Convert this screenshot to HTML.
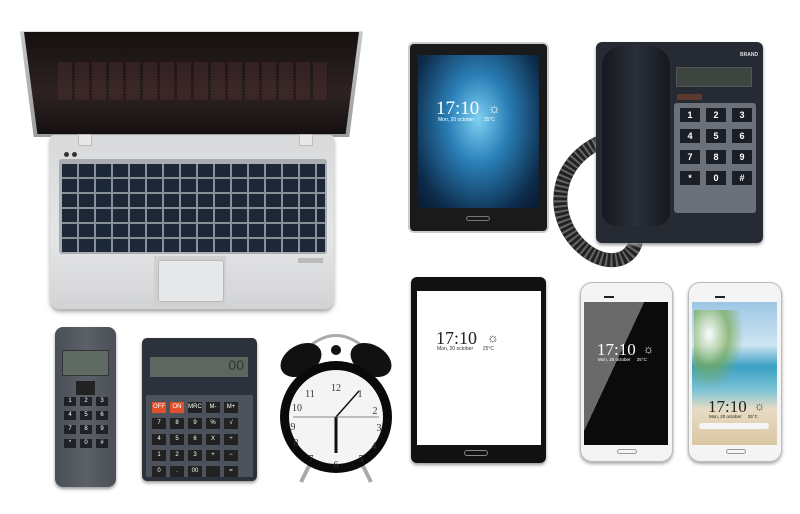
<!DOCTYPE html>
<html><head><meta charset="utf-8"><style>
*{margin:0;padding:0;box-sizing:border-box}
body{width:800px;height:514px;background:#fff;position:relative;overflow:hidden;font-family:"Liberation Sans",sans-serif}
.a{position:absolute}
.kb{background-color:#1c2738;background-image:repeating-linear-gradient(90deg,transparent 0 15px,#8a9098 15px 17px),repeating-linear-gradient(0deg,transparent 0 13px,#8a9098 13px 15px)}
.time{font-family:"Liberation Serif",serif}
</style></head><body>

<!-- laptop lid -->
<div class="a" style="left:20px;top:27px;width:343px;height:110px;background:linear-gradient(#c9cbcd,#9a9ca0);clip-path:polygon(0 4%,100% 4%,96% 100%,4% 100%);border-radius:6px"></div>
<div class="a" style="left:24px;top:32px;width:335px;height:102px;background:linear-gradient(180deg,#151010,#2e2222 60%,#151010);clip-path:polygon(0 0,100% 0,96% 100%,4% 100%)"></div>
<div class="a" style="left:58px;top:62px;width:270px;height:38px;opacity:.25;background-image:repeating-linear-gradient(90deg,#6a3a3a 0 14px,transparent 14px 17px),repeating-linear-gradient(0deg,transparent 0 2px,#000 2px 3px)"></div>
<!-- laptop base -->
<div class="a" style="left:50px;top:135px;width:284px;height:174px;background:linear-gradient(180deg,#d8d9db,#e4e5e7 60%,#d2d3d5);border-radius:4px 4px 10px 10px;box-shadow:0 3px 4px #aaa"></div>
<div class="a" style="left:78px;top:134px;width:14px;height:12px;background:#e8e8e8;border:1px solid #bbb"></div>
<div class="a" style="left:299px;top:134px;width:14px;height:12px;background:#e8e8e8;border:1px solid #bbb"></div>
<div class="a" style="left:64px;top:152px;width:5px;height:5px;border-radius:50%;background:#333"></div>
<div class="a" style="left:72px;top:152px;width:5px;height:5px;border-radius:50%;background:#333"></div>
<div class="a" style="left:59px;top:159px;width:268px;height:95px;background:#a9acb1;border-radius:3px"></div>
<div class="a kb" style="left:62px;top:164px;width:263px;height:88px"></div>
<div class="a" style="left:154px;top:256px;width:72px;height:50px;background:#cfd0d2"></div>
<div class="a" style="left:158px;top:260px;width:66px;height:42px;background:#e7e8ea;border:1px solid #bbb;border-radius:3px"></div>
<div class="a" style="left:298px;top:258px;width:25px;height:5px;background:#bbb"></div>

<!-- tablet 1 -->
<div class="a" style="left:408px;top:42px;width:141px;height:191px;background:#1a1a1a;border-radius:6px;border:2px solid #ccc"></div>
<div class="a" style="left:418px;top:55px;width:121px;height:153px;background:radial-gradient(ellipse at 50% 42%,#7fd0f2,#2a80b8 35%,#0d2b4a 80%,#081a30 100%)"></div>
<div class="a time" style="left:436px;top:98px;color:#fff;font-size:19px">17:10</div>
<div class="a" style="left:488px;top:100px;color:#fff;font-size:14px">☼</div>
<div class="a" style="left:438px;top:117px;color:#fff;font-size:5px">Mon, 20 october &nbsp; &nbsp; &nbsp; 25°C</div>
<div class="a" style="left:466px;top:216px;width:24px;height:5px;border:1px solid #777;border-radius:3px"></div>

<!-- desk phone cord -->
<svg class="a" style="left:545px;top:130px" width="110" height="140"><path d="M60 10 C10 30,5 80,30 110 S90 135,92 105" fill="none" stroke="#222" stroke-width="14"/><path d="M60 10 C10 30,5 80,30 110 S90 135,92 105" fill="none" stroke="#666" stroke-width="14" stroke-dasharray="2 3"/></svg>
<!-- desk phone -->
<div class="a" style="left:596px;top:42px;width:167px;height:201px;background:#252a33;border-radius:6px;box-shadow:0 2px 3px #999"></div>
<div class="a" style="left:602px;top:46px;width:68px;height:180px;background:linear-gradient(90deg,#15181e,#2a2f39,#15181e);border-radius:20px 20px 14px 14px"></div>
<div class="a" style="left:740px;top:52px;color:#ddd;font-size:5px;font-weight:bold">BRAND</div>
<div class="a" style="left:676px;top:67px;width:76px;height:20px;background:#3d4540;border:1px solid #555"></div>
<div class="a" style="left:677px;top:94px;width:25px;height:6px;background:#5a3a2a"></div>
<div class="a" style="left:674px;top:103px;width:82px;height:110px;background:#6b7079;border-radius:3px"></div>
<div class="a" style="left:680px;top:108px;width:72px;display:grid;grid-template-columns:repeat(3,20px);gap:7px 6px;color:#fff;font-size:9px;font-weight:bold;text-align:center;line-height:14px">
<span style="background:#1a1e26">1</span><span style="background:#1a1e26">2</span><span style="background:#1a1e26">3</span><span style="background:#1a1e26">4</span><span style="background:#1a1e26">5</span><span style="background:#1a1e26">6</span><span style="background:#1a1e26">7</span><span style="background:#1a1e26">8</span><span style="background:#1a1e26">9</span><span style="background:#1a1e26">*</span><span style="background:#1a1e26">0</span><span style="background:#1a1e26">#</span></div>

<!-- remote -->
<div class="a" style="left:55px;top:327px;width:61px;height:160px;background:linear-gradient(90deg,#4a4f56,#5c6169,#4a4f56);border-radius:8px;box-shadow:0 2px 3px #999"></div>
<div class="a" style="left:62px;top:350px;width:47px;height:26px;background:#5f6a62;border:1px solid #333"></div>
<div class="a" style="left:76px;top:381px;width:19px;height:14px;background:#222"></div>
<div class="a" style="left:64px;top:397px;width:45px;display:grid;grid-template-columns:repeat(3,12px);gap:5px 4px;color:#fff;font-size:6px;text-align:center;line-height:9px">
<span style="background:#1e2228">1</span><span style="background:#1e2228">2</span><span style="background:#1e2228">3</span><span style="background:#1e2228">4</span><span style="background:#1e2228">5</span><span style="background:#1e2228">6</span><span style="background:#1e2228">7</span><span style="background:#1e2228">8</span><span style="background:#1e2228">9</span><span style="background:#1e2228">*</span><span style="background:#1e2228">0</span><span style="background:#1e2228">#</span></div>

<!-- calculator -->
<div class="a" style="left:142px;top:338px;width:115px;height:143px;background:#2c323b;border-radius:5px;box-shadow:0 2px 3px #999"></div>
<div class="a" style="left:150px;top:357px;width:98px;height:20px;background:#5d665f;color:#333;font-size:14px;text-align:right;padding-right:4px">00</div>
<div class="a" style="left:146px;top:395px;width:107px;height:82px;background:#4d535c"></div>
<div class="a" style="left:152px;top:402px;width:100px;display:grid;grid-template-columns:repeat(5,14px);gap:5px 4px;color:#fff;font-size:6px;text-align:center;line-height:11px">
<span style="background:#e0502a">OFF</span><span style="background:#e0502a">ON</span><span style="background:#222">MRC</span><span style="background:#222">M-</span><span style="background:#222">M+</span>
<span style="background:#222">7</span><span style="background:#222">8</span><span style="background:#222">9</span><span style="background:#222">%</span><span style="background:#222">√</span>
<span style="background:#222">4</span><span style="background:#222">5</span><span style="background:#222">6</span><span style="background:#222">X</span><span style="background:#222">÷</span>
<span style="background:#222">1</span><span style="background:#222">2</span><span style="background:#222">3</span><span style="background:#222">+</span><span style="background:#222">−</span>
<span style="background:#222">0</span><span style="background:#222">.</span><span style="background:#222">00</span><span style="background:#222"></span><span style="background:#222">=</span></div>

<!-- clock -->
<svg class="a" style="left:271px;top:322px" width="130" height="165">
<path d="M30 32 Q65 -5 100 32" fill="none" stroke="#aaa" stroke-width="3"/>
<line x1="40" y1="140" x2="30" y2="160" stroke="#aaa" stroke-width="4"/><line x1="90" y1="140" x2="100" y2="160" stroke="#aaa" stroke-width="4"/>
<ellipse cx="30" cy="38" rx="22" ry="15" fill="#111" transform="rotate(-30 30 38)"/>
<ellipse cx="100" cy="38" rx="22" ry="15" fill="#111" transform="rotate(30 100 38)"/>
<circle cx="65" cy="28" r="5" fill="#111"/>
<circle cx="65" cy="95" r="56" fill="#0a0a0a"/>
<circle cx="65" cy="95" r="47" fill="#f4f4f4"/>
<g font-family="Liberation Serif" font-size="10" fill="#333" text-anchor="middle">
<text x="65" y="69">12</text><text x="89" y="75">1</text><text x="104" y="92">2</text><text x="108" y="109">3</text><text x="103" y="127">4</text><text x="90" y="140">5</text><text x="65" y="146">6</text><text x="40" y="140">7</text><text x="25" y="124">8</text><text x="22" y="108">9</text><text x="26" y="89">10</text><text x="39" y="75">11</text></g>
<line x1="65" y1="95" x2="88" y2="69" stroke="#111" stroke-width="1.5"/>
<line x1="65" y1="95" x2="65" y2="131" stroke="#111" stroke-width="3"/>
<line x1="22" y1="95" x2="108" y2="95" stroke="#666" stroke-width=".7"/>
</svg>

<!-- tablet 2 -->
<div class="a" style="left:411px;top:277px;width:135px;height:186px;background:#111;border-radius:6px;box-shadow:0 2px 3px #999"></div>
<div class="a" style="left:417px;top:291px;width:124px;height:154px;background:#fff"></div>
<div class="a time" style="left:436px;top:328px;color:#222;font-size:18px">17:10</div>
<div class="a" style="left:487px;top:330px;color:#333;font-size:13px">☼</div>
<div class="a" style="left:437px;top:346px;color:#333;font-size:5px">Mon, 20 october &nbsp; &nbsp; &nbsp; 25°C</div>
<div class="a" style="left:464px;top:450px;width:24px;height:6px;border:1px solid #888;border-radius:3px"></div>

<!-- phone 1 -->
<div class="a" style="left:580px;top:282px;width:93px;height:180px;background:#f4f4f4;border:1px solid #bbb;border-radius:12px;box-shadow:0 2px 3px #aaa"></div>
<div class="a" style="left:604px;top:296px;width:10px;height:2px;background:#222"></div>
<div class="a" style="left:584px;top:302px;width:84px;height:143px;background:linear-gradient(115deg,#6a6a6a 0 40%,#0b0b0b 40%)"></div>
<div class="a time" style="left:597px;top:340px;color:#fff;font-size:17px">17:10</div>
<div class="a" style="left:643px;top:342px;color:#fff;font-size:12px">☼</div>
<div class="a" style="left:598px;top:357px;color:#fff;font-size:4.5px">Mon, 20 october &nbsp; &nbsp; 25°C</div>
<div class="a" style="left:617px;top:449px;width:20px;height:5px;border:1px solid #999;border-radius:3px"></div>

<!-- phone 2 -->
<div class="a" style="left:688px;top:282px;width:94px;height:180px;background:#f4f4f4;border:1px solid #bbb;border-radius:12px;box-shadow:0 2px 3px #aaa"></div>
<div class="a" style="left:715px;top:296px;width:10px;height:2px;background:#222"></div>
<div class="a" style="left:692px;top:302px;width:85px;height:143px;background:linear-gradient(180deg,#9cc6e4 0,#cfe4f2 30%,#3aa0c4 45%,#7fc3d6 62%,#e8dcc4 75%,#d9c6a2 100%)"></div>
<div class="a" style="left:694px;top:310px;width:50px;height:80px;background:radial-gradient(ellipse at 30% 30%,rgba(255,255,255,.9),rgba(120,170,80,.7) 40%,transparent 70%)"></div>
<div class="a time" style="left:708px;top:397px;color:#222;font-size:17px">17:10</div>
<div class="a" style="left:754px;top:399px;color:#333;font-size:12px">☼</div>
<div class="a" style="left:709px;top:414px;color:#222;font-size:4.5px">Mon, 20 october &nbsp; &nbsp; 25°C</div>
<div class="a" style="left:699px;top:423px;width:70px;height:6px;background:#f4f4f4;border-radius:3px"></div>
<div class="a" style="left:726px;top:449px;width:20px;height:5px;border:1px solid #999;border-radius:3px"></div>
</body></html>
